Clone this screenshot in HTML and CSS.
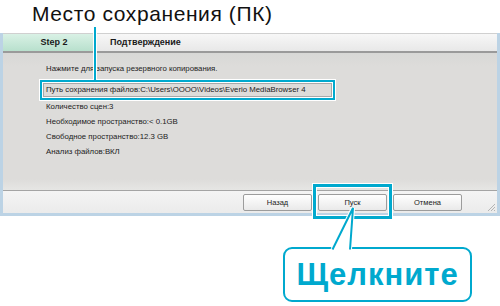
FILE: index.html
```html
<!DOCTYPE html>
<html lang="ru">
<head>
    <meta charset="UTF-8">
    <title>Место сохранения (ПК)</title>
    <link rel="stylesheet" href="styles.css">
</head>
<body>
    <div class="page">
        <h1 class="title">Место сохранения (ПК)</h1>

        <div class="window">
            <div class="tabs">
                <div class="tab-step">Step 2</div>
                <div class="tab-name">Подтверждение</div>
            </div>

            <div class="content">
                <p class="line">Нажмите для запуска резервного копирования.</p>
                <p class="line path">Путь сохранения файлов:C:\Users\OOOO\Videos\Everio MediaBrowser 4</p>
                <p class="line first-after">Количество сцен:3</p>
                <p class="line">Необходимое пространство:&lt; 0.1GB</p>
                <p class="line">Свободное пространство:12.3 GB</p>
                <p class="line">Анализ файлов:ВКЛ</p>
            </div>

            <div class="footer">
                <button class="btn">Назад</button>
                <button class="btn">Пуск</button>
                <button class="btn">Отмена</button>
                <svg class="grip" width="9" height="9" viewBox="0 0 9 9">
                    <path d="M8 1 L1 8 M8 4 L4 8 M8 7 L7 8" stroke="#b4b4b4" stroke-width="1"/>
                </svg>
            </div>
        </div>

        <!-- подсказки поверх окна -->
        <div class="mark-start"></div>
        <div class="bubble">Щелкните</div>
        <svg class="marks" width="500" height="306" viewBox="0 0 500 306">
            <line x1="95" y1="27" x2="95" y2="80" stroke="#fff" stroke-width="4"/>
            <line x1="95" y1="27" x2="95" y2="80" stroke="#00a9ce" stroke-width="2"/>
            <path d="M332.5 249.5 L353 208 L350 249.5" fill="#fff" stroke="#fff" stroke-width="4"/>
            <path d="M332.5 249.5 L353 208 L350 249.5" fill="#fff" stroke="#00a9ce" stroke-width="2"/>
        </svg>
    </div>
</body>
</html>
```

FILE: styles.css
```css
:root {
    --cyan: #00a9ce;
    --frame: #bcd3e5;
}

* {
    box-sizing: border-box;
    margin: 0;
    padding: 0;
}

body {
    font-family: 'Liberation Sans', Arial, sans-serif;
    background: #ffffff;
    color: #1a1a1a;
}

.page {
    position: relative;
    width: 500px;
    height: 306px;
    overflow: hidden;
}

.title {
    height: 33px;
    padding: 3px 0 0 32px;
    font-size: 21px;
    font-weight: normal;
    line-height: 22px;
    letter-spacing: 0.6px;
    color: #111;
}

.window {
    border-left: 3px solid var(--frame);
    border-right: 3px solid var(--frame);
    border-bottom: 3px solid var(--frame);
}

.tabs {
    display: flex;
    height: 20px;
    border-top: 1px solid #d0d0d0;
    border-bottom: 2px solid #9a9a9a;
    background: linear-gradient(#f7f7f7, #e8e8e8);
    font-size: 9px;
    font-weight: bold;
    line-height: 17px;
}

.tab-step {
    width: 90px;
    text-align: center;
    padding-left: 12px;
    background: linear-gradient(#d9f1e5, #b8e0cd);
}

.tab-name {
    padding-left: 17px;
}

.content {
    height: 138px;
    padding: 8px 0 0 43px;
    background: linear-gradient(#d8d8d6, #dddcda 10%, #dddcda 92%, #e6e6e4);
    border-bottom: 1px solid #a4a4a4;
    font-size: 7.8px;
    color: #222;
}

.line {
    line-height: 15px;
}

.path {
    width: 289px;
    margin: 7px 0 0 -3px;
    padding-left: 2px;
    line-height: 12px;
    border: 1px solid #a8a8a8;
    box-shadow: 0 0 0 1px #fff, 0 0 0 3px var(--cyan), 0 0 0 4px #fff;
}

.first-after {
    margin-top: 2px;
}

.footer {
    position: relative;
    display: flex;
    justify-content: flex-end;
    gap: 6px;
    height: 22px;
    padding: 3px 35px 0 0;
    background: linear-gradient(#f4f4f4, #ebebeb);
}

.btn {
    width: 69px;
    height: 17px;
    font-family: inherit;
    font-size: 7.5px;
    color: #222;
    background: linear-gradient(#ffffff, #e9e9e9);
    border: 1px solid #9c9c9c;
    border-radius: 2px;
}

.grip {
    position: absolute;
    right: 1px;
    bottom: 1px;
}

.mark-start {
    position: absolute;
    left: 313px;
    top: 184px;
    width: 79px;
    height: 35px;
    border: 3px solid var(--cyan);
    box-shadow: 0 0 0 1px #fff, inset 0 0 0 1px #fff;
}

.bubble {
    position: absolute;
    left: 283px;
    top: 247px;
    width: 189px;
    height: 55px;
    border: 2px solid var(--cyan);
    border-radius: 9px;
    background: #fff;
    color: var(--cyan);
    font-size: 31px;
    font-weight: bold;
    letter-spacing: 1px;
    line-height: 51px;
    text-align: center;
}

.marks {
    position: absolute;
    left: 0;
    top: 0;
    pointer-events: none;
}
```
